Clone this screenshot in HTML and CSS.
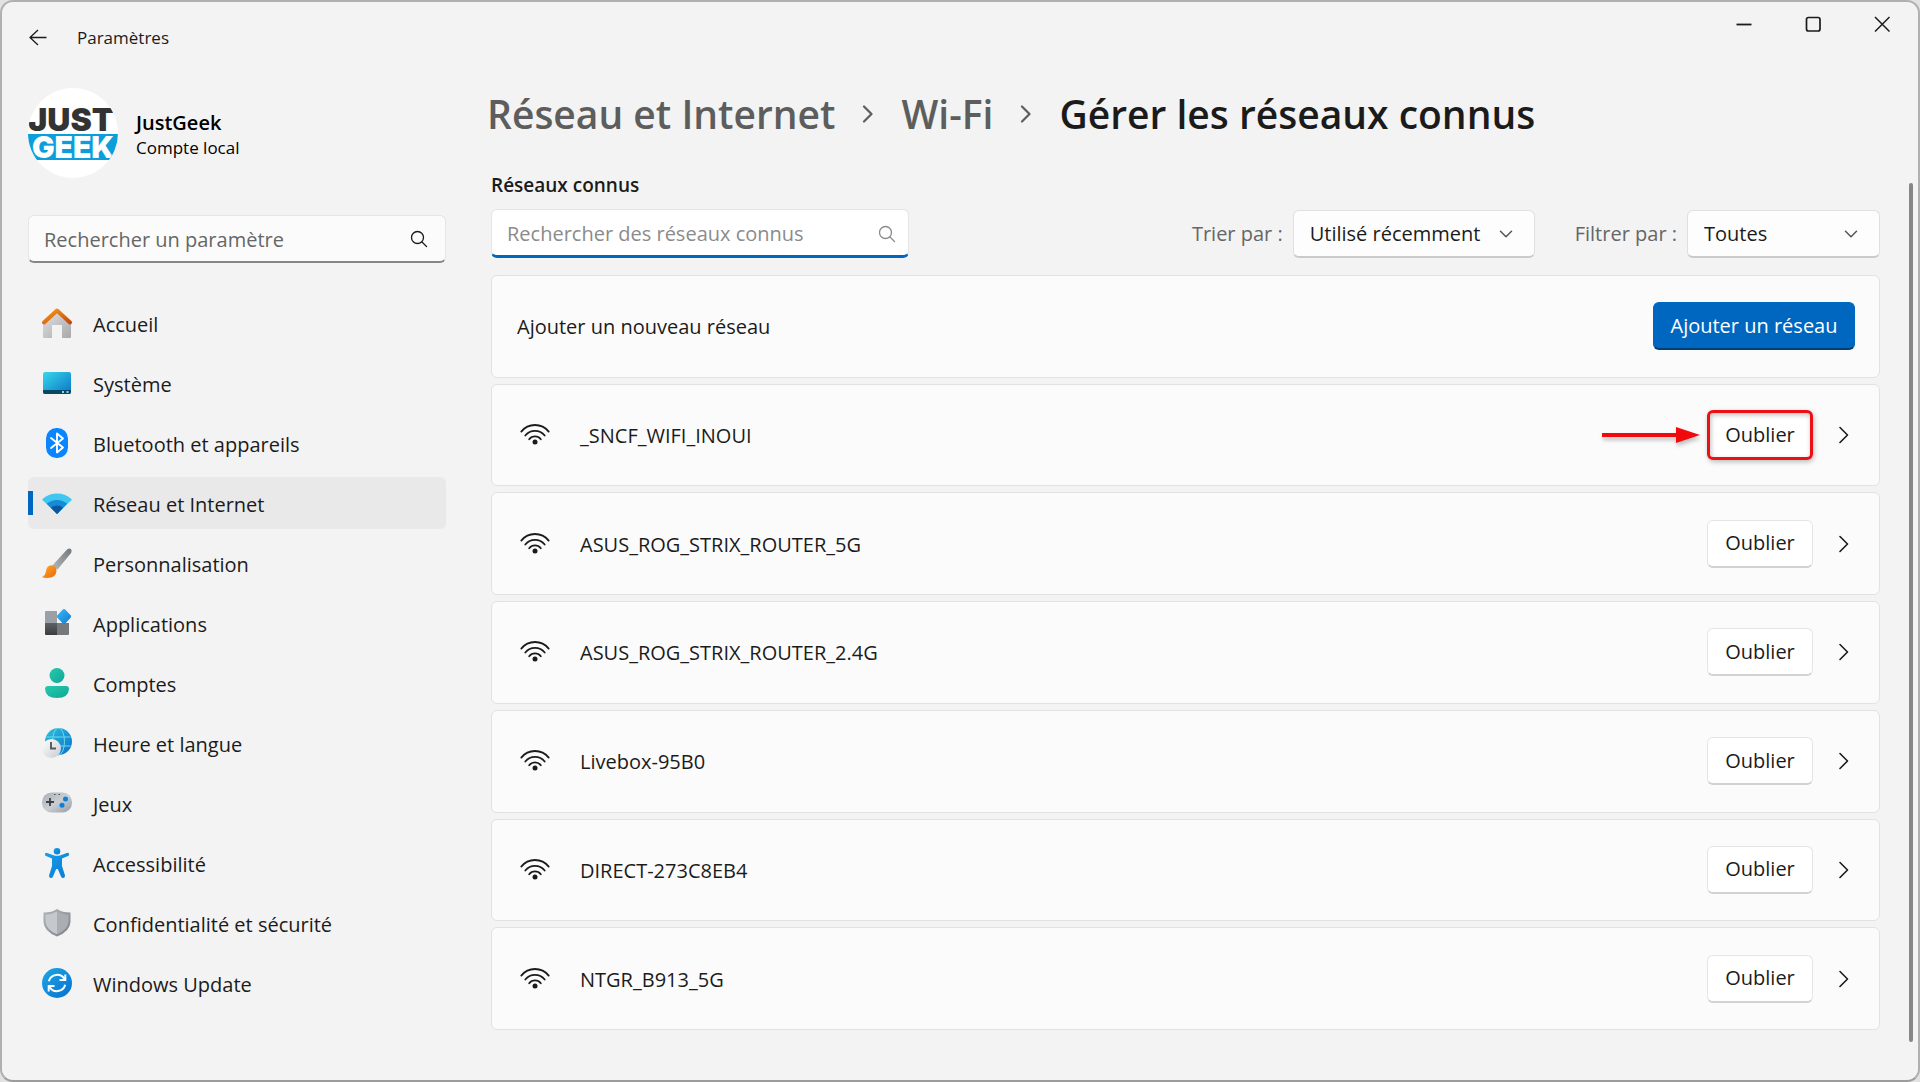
FILE: index.html
```html
<!DOCTYPE html>
<html lang="fr">
<head>
<meta charset="utf-8">
<meta name="viewport" content="width=device-width, initial-scale=1">
<title>Paramètres</title>
<link rel="stylesheet" href="styles.css">
</head>
<body>
<svg class="sprite" aria-hidden="true">
  <defs>
    <linearGradient id="g-roof" x1="0" y1="0" x2="1" y2="1"><stop offset="0" stop-color="#f59a1b"/><stop offset="1" stop-color="#c9480a"/></linearGradient>
    <linearGradient id="g-wall" x1="0" y1="0" x2="1" y2="1"><stop offset="0" stop-color="#e2e2e4"/><stop offset="1" stop-color="#a9a9ac"/></linearGradient>
    <linearGradient id="g-screen" x1="0" y1="0" x2="1" y2="1"><stop offset="0" stop-color="#36d8ec"/><stop offset="1" stop-color="#0b74c4"/></linearGradient>
    <linearGradient id="g-handle" x1="0" y1="1" x2="1" y2="0"><stop offset="0" stop-color="#b4b9bd"/><stop offset="1" stop-color="#72787c"/></linearGradient>
    <linearGradient id="g-brush" x1="0" y1="0" x2="1" y2="1"><stop offset="0" stop-color="#ffab25"/><stop offset="1" stop-color="#e8680f"/></linearGradient>
    <linearGradient id="g-dark" x1="0" y1="0" x2="0" y2="1"><stop offset="0" stop-color="#5d6165"/><stop offset="1" stop-color="#3a3d40"/></linearGradient>
    <linearGradient id="g-diamond" x1="0" y1="0" x2="1" y2="1"><stop offset="0" stop-color="#42b9f5"/><stop offset="1" stop-color="#0c78d4"/></linearGradient>
    <linearGradient id="g-user" x1="0" y1="0" x2="1" y2="1"><stop offset="0" stop-color="#27c9b0"/><stop offset="1" stop-color="#0fa893"/></linearGradient>
    <linearGradient id="g-globe" x1="0" y1="0" x2="1" y2="1"><stop offset="0" stop-color="#2fc3dc"/><stop offset="1" stop-color="#0a6fcb"/></linearGradient>
    <linearGradient id="g-clock" x1="0" y1="0" x2="1" y2="1"><stop offset="0" stop-color="#ffffff"/><stop offset="1" stop-color="#c8cbd0"/></linearGradient>
    <linearGradient id="g-pad" x1="0" y1="0" x2="1" y2="1"><stop offset="0" stop-color="#a9afb7"/><stop offset="0.5" stop-color="#c9ced3"/><stop offset="1" stop-color="#969ca4"/></linearGradient>
    <linearGradient id="g-man" x1="0" y1="0" x2="1" y2="1"><stop offset="0" stop-color="#18a0ea"/><stop offset="1" stop-color="#0a78d4"/></linearGradient>
    <linearGradient id="g-shield" x1="0" y1="0" x2="1" y2="1"><stop offset="0" stop-color="#b3b7ba"/><stop offset="1" stop-color="#7b7f83"/></linearGradient>
    <linearGradient id="g-update" x1="0" y1="0" x2="1" y2="1"><stop offset="0" stop-color="#1fa7e4"/><stop offset="1" stop-color="#0670d2"/></linearGradient>
  </defs>
  <symbol id="wifi" viewBox="0 0 30 24">
    <g fill="none" stroke="currentColor" stroke-width="1.8" stroke-linecap="round"><path d="M1.300 9.600A17.500 17.500 0 0 1 28.700 9.600"/><path d="M5.300 13.500A12.500 12.500 0 0 1 24.700 13.500"/><path d="M9.200 17.200A7.400 7.400 0 0 1 20.800 17.200"/></g>
    <circle cx="15" cy="20" r="2.500" fill="currentColor"/>
  </symbol>
  <symbol id="right" viewBox="0 0 10 18"><path d="M1 1.500L8.500 9L1 16.500" fill="none" stroke="currentColor" stroke-width="1.600" stroke-linecap="round" stroke-linejoin="round"/></symbol>
  <symbol id="crumb" viewBox="0 0 12 18"><path d="M2 1.500L9.500 9L2 16.500" fill="none" stroke="currentColor" stroke-width="2.200" stroke-linecap="round" stroke-linejoin="round"/></symbol>
  <symbol id="down" viewBox="0 0 14 14"><path d="M1.500 4.200L7 9.700L12.500 4.200" fill="none" stroke="currentColor" stroke-width="1.500" stroke-linecap="round" stroke-linejoin="round"/></symbol>
  <symbol id="search" viewBox="0 0 18 18"><g fill="none" stroke="currentColor" stroke-width="1.300" stroke-linecap="round"><circle cx="7.500" cy="7.500" r="6"/><path d="M12 12L16.500 16.500"/></g></symbol>
</svg>

<div class="window">
  <header class="titlebar">
    <button class="back" aria-label="Retour"><svg width="18" height="18" viewBox="0 0 18 18"><path d="M17.500 8.500H1M9 1L1 8.500L9 16" fill="none" stroke="currentColor" stroke-width="1.300" stroke-linejoin="round"/></svg></button>
    <span class="app-name">Paramètres</span>
    <div class="caption">
      <button aria-label="Réduire"><svg width="16" height="16" viewBox="0 0 16 16"><path d="M.5 8.500H15.500" fill="none" stroke="currentColor" stroke-width="1.800"/></svg></button>
      <button aria-label="Agrandir"><svg width="16" height="16" viewBox="0 0 16 16"><rect x="1.500" y="1.500" width="13.500" height="13.500" rx="2" fill="none" stroke="currentColor" stroke-width="1.700"/></svg></button>
      <button aria-label="Fermer"><svg width="16" height="16" viewBox="0 0 16 16"><path d="M1 1L15.500 15.500M15.500 1L1 15.500" fill="none" stroke="currentColor" stroke-width="1.500"/></svg></button>
    </div>
  </header>

  <div class="body">
    <aside class="sidebar">
      <div class="account">
        <svg class="avatar" viewBox="0 0 90 90" role="img" aria-label="JustGeek">
          <clipPath id="disc"><circle cx="45" cy="45" r="45"/></clipPath>
          <g clip-path="url(#disc)"><rect width="90" height="90" fill="#fff"/>
            <text class="logo-top" x="43" y="43" text-anchor="middle" fill="#333">JUST</text>
            <rect y="46" width="90" height="26" fill="#0c9edb"/>
            <text class="logo-bottom" x="45" y="70" text-anchor="middle" fill="#fff">GEEK</text>
          </g>
        </svg>
        <div class="user">
          <div class="user-name">JustGeek</div>
          <div class="user-type">Compte local</div>
        </div>
      </div>

      <label class="field field-setting">
        <input type="text" placeholder="Rechercher un paramètre" aria-label="Rechercher un paramètre">
        <svg class="field-icon" width="18" height="18"><use href="#search"/></svg>
      </label>

      <nav class="menu">
        <a href="#"><svg viewBox="0 0 30 30"><path d="M1 14L15 2L29 14V29Q29 30 28 30H20V17H10V30H2Q1 30 1 29Z" fill="url(#g-wall)"/><path d="M2 14.500L15 2.500L28 14.500" fill="none" stroke="url(#g-roof)" stroke-width="4" stroke-linecap="round" stroke-linejoin="round"/></svg><span>Accueil</span></a>
        <a href="#"><svg viewBox="0 0 30 30"><rect x="1" y="4" width="28" height="22" rx="2" fill="url(#g-screen)"/><path d="M1 22H29V24Q29 26 27 26H3Q1 26 1 24Z" fill="#0a4763"/><path d="M20 23h2v2h-2zM24.500 23h2v2h-2z" fill="#7fd9ea"/></svg><span>Système</span></a>
        <a href="#"><svg viewBox="0 0 30 30"><rect x="4" width="22" height="30" rx="10.500" fill="#0a84ff"/><path d="M9 10L21 19.500L15 24.500V5.500L21 10.500L9 20" fill="none" stroke="#fff" stroke-width="1.900" stroke-linejoin="round" stroke-linecap="round"/></svg><span>Bluetooth et appareils</span></a>
        <a href="#" class="active" aria-current="page"><svg viewBox="0 0 30 30"><path d="M15 26L.7 12.200Q0 11.400 .8 10.700A22 22 0 0 1 29.200 10.700Q30 11.400 29.300 12.200Z" fill="#3fc7ef"/><path d="M15 26L4.800 15.800A15.500 15.500 0 0 1 25.200 15.800Z" fill="#158bd8"/><path d="M15 26L9 19.800A9 9 0 0 1 21 19.800L15.700 25.500Q15 26.200 14.300 25.500Z" fill="#0c56a0"/></svg><span>Réseau et Internet</span></a>
        <a href="#"><svg viewBox="0 0 30 30"><path d="M10 18L25 1.500Q27 -.3 29 1Q30.300 3 28.700 5.500L15.500 21.500Z" fill="url(#g-handle)"/><path d="M.8 28.500Q3.500 27 3.800 24Q4.500 17.500 9.500 17.300Q14 18 14.500 22Q14.500 28 9 29.500Q4.500 30.300 .8 29.500Q0 29 .8 28.500Z" fill="url(#g-brush)"/></svg><span>Personnalisation</span></a>
        <a href="#"><svg viewBox="0 0 30 30"><path d="M3 4Q3 3 4 3H15V15H3Z" fill="#9aa0a6"/><path d="M3 15H15V27H4Q3 27 3 26Z" fill="url(#g-dark)"/><path d="M15 15H27V26Q27 27 26 27H15Z" fill="#75797e"/><path d="M20.800 1.500Q22 .4 23.200 1.500L28.600 7.300Q29.500 8.500 28.600 9.700L23.200 15.500Q22 16.600 20.800 15.500L15.400 9.700Q14.500 8.500 15.400 7.300Z" fill="url(#g-diamond)"/></svg><span>Applications</span></a>
        <a href="#"><svg viewBox="0 0 30 30"><circle cx="15" cy="7.500" r="7.500" fill="url(#g-user)"/><path d="M6 18H24Q27 18 27 21Q26.500 30 15 30Q3.500 30 3 21Q3 18 6 18Z" fill="url(#g-user)"/></svg><span>Comptes</span></a>
        <a href="#"><svg viewBox="0 0 30 30"><circle cx="16.500" cy="13.500" r="13.500" fill="url(#g-globe)"/><g fill="none" stroke="#6fd9e8" stroke-width="1"><ellipse cx="16.500" cy="13.500" rx="6" ry="13.500"/><path d="M4.500 9H28.500M4.500 18H28.500"/></g><circle cx="9.500" cy="20.500" r="9.500" fill="url(#g-clock)"/><path d="M9 14V20.500H14" fill="none" stroke="#54585c" stroke-width="1.900"/></svg><span>Heure et langue</span></a>
        <a href="#"><svg viewBox="0 0 30 30"><rect y="4.500" width="30" height="20" rx="9.500" fill="url(#g-pad)"/><path d="M8 10V18M4 14H12" stroke="#3d4247" stroke-width="1.800"/><path d="M12 6.500h1.500M16.500 6.500h1.500" stroke="#4b5055" stroke-width="1.200"/><circle cx="23.500" cy="11" r="2.500" fill="#0f7fd8"/><circle cx="20" cy="17.300" r="2.500" fill="#0f7fd8"/></svg><span>Jeux</span></a>
        <a href="#"><svg viewBox="0 0 30 30"><g fill="url(#g-man)"><circle cx="15" cy="3.300" r="3.300"/><path d="M4.500 4.700L11.500 7.200Q15 8.200 18.500 7.200L25.500 4.700Q27.300 4.700 27.200 6.500Q27 7.500 26 8L20 10.500V18L23 27.500Q23 30 21 30Q19.600 30 19 28.500L15.800 21H14.200L11 28.500Q10.400 30 9 30Q7 30 7 27.500L10 18V10.500L4 8Q3 7.500 2.900 6.500Q2.800 4.700 4.500 4.700Z"/></g></svg><span>Accessibilité</span></a>
        <a href="#"><svg viewBox="0 0 30 30"><path d="M15 1Q20 4.600 28.500 4.600V14Q28 23.500 15 28.500Q2 23.500 1.500 14V4.600Q10 4.600 15 1Z" fill="url(#g-shield)"/><path d="M15 3.500Q9.500 6.500 3.500 6.700V14Q4.500 21.800 15 26.300Z" fill="#c5c9cd"/><path d="M15 3.500Q20.500 6.500 26.500 6.700V14Q25.500 21.800 15 26.300Z" fill="#aaaeb3"/></svg><span>Confidentialité et sécurité</span></a>
        <a href="#"><svg viewBox="0 0 30 30"><circle cx="15" cy="15" r="15" fill="url(#g-update)"/><g fill="none" stroke="#fff" stroke-width="2"><path d="M6.800 13.200A8.600 8.600 0 0 1 22.600 11.300M23.200 16.800A8.600 8.600 0 0 1 7.400 18.700"/><path d="M23.300 6.500V12H17.500M6.700 23.500V18H12.500"/></g></svg><span>Windows Update</span></a>
      </nav>
    </aside>

    <main class="main">
      <h1 class="breadcrumb">
        <a href="#">Réseau et Internet</a>
        <svg width="12" height="18"><use href="#crumb"/></svg>
        <a href="#">Wi-Fi</a>
        <svg width="12" height="18"><use href="#crumb"/></svg>
        <span>Gérer les réseaux connus</span>
      </h1>
      <h2 class="section-title"><label for="network-search">Réseaux connus</label></h2>

      <div class="toolbar">
        <div class="field field-network">
          <input id="network-search" type="text" placeholder="Rechercher des réseaux connus">
          <svg class="field-icon" width="18" height="18"><use href="#search"/></svg>
        </div>
        <div class="filters">
          <div class="filter">
            <label for="sort">Trier par :</label>
            <div class="combo combo-sort"><select id="sort"><option>Utilisé récemment</option></select><svg width="14" height="14"><use href="#down"/></svg></div>
          </div>
          <div class="filter">
            <label for="filter">Filtrer par :</label>
            <div class="combo combo-filter"><select id="filter"><option>Toutes</option></select><svg width="14" height="14"><use href="#down"/></svg></div>
          </div>
        </div>
      </div>

      <div class="cards">
        <section class="card card-add"><span class="card-name">Ajouter un nouveau réseau</span><button class="btn btn-primary">Ajouter un réseau</button></section>
        <section class="card"><svg class="wifi"><use href="#wifi"/></svg><span class="card-name">_SNCF_WIFI_INOUI</span>
          <span class="callout"><svg class="arrow" viewBox="0 0 98 18" aria-hidden="true"><path d="M0 7H74V1L98 9L74 17V11H0Z" fill="#f00a0e"/></svg><button class="btn btn-marked">Oublier</button></span>
          <button class="more" aria-label="Détails"><svg width="10" height="18"><use href="#right"/></svg></button></section>
        <section class="card"><svg class="wifi"><use href="#wifi"/></svg><span class="card-name">ASUS_ROG_STRIX_ROUTER_5G</span><button class="btn">Oublier</button><button class="more" aria-label="Détails"><svg width="10" height="18"><use href="#right"/></svg></button></section>
        <section class="card"><svg class="wifi"><use href="#wifi"/></svg><span class="card-name">ASUS_ROG_STRIX_ROUTER_2.4G</span><button class="btn">Oublier</button><button class="more" aria-label="Détails"><svg width="10" height="18"><use href="#right"/></svg></button></section>
        <section class="card"><svg class="wifi"><use href="#wifi"/></svg><span class="card-name">Livebox-95B0</span><button class="btn">Oublier</button><button class="more" aria-label="Détails"><svg width="10" height="18"><use href="#right"/></svg></button></section>
        <section class="card"><svg class="wifi"><use href="#wifi"/></svg><span class="card-name">DIRECT-273C8EB4</span><button class="btn">Oublier</button><button class="more" aria-label="Détails"><svg width="10" height="18"><use href="#right"/></svg></button></section>
        <section class="card"><svg class="wifi"><use href="#wifi"/></svg><span class="card-name">NTGR_B913_5G</span><button class="btn">Oublier</button><button class="more" aria-label="Détails"><svg width="10" height="18"><use href="#right"/></svg></button></section>
      </div>
    </main>

    <div class="scrollbar" aria-hidden="true"></div>
  </div>
</div>
</body>
</html>
```
FILE: styles.css
```css
* { box-sizing: border-box; }
body {
  margin: 0;
  background: #e2e2e2;
  color: #1b1b1b;
  font: 20px/28px "Open Sans", "Noto Sans", sans-serif;
}
button, input, select { font: inherit; color: inherit; margin: 0; }
button { border: 0; padding: 0; background: none; }
a { color: inherit; text-decoration: none; }
svg { flex: none; display: block; }
.sprite { position: absolute; width: 0; height: 0; }

.window {
  display: flex;
  flex-direction: column;
  min-height: 100vh;
  background: #f3f3f3;
  border: 2px solid #b0b0b0;
  border-bottom-color: #9c9c9c;
  border-radius: 13px;
}

/* Title bar */
.titlebar { display: flex; align-items: center; height: 72px; padding-left: 27px; }
.back { display: grid; place-items: center; width: 18px; height: 28px; }
.app-name { margin-left: 30px; font-size: 17px; }
.caption { display: flex; align-self: flex-start; margin-left: auto; margin-right: 2px; }
.caption button { display: grid; place-items: center; width: 69px; height: 44px; }

.body {
  flex: 1;
  display: grid;
  grid-template-columns: 418px minmax(0, 1fr) 4px;
  padding: 0 5px 0 26px;
}

/* Sidebar */
.sidebar { padding-top: 14px; }
.account { display: flex; align-items: center; gap: 18px; }
.avatar { width: 90px; height: 90px; }
.logo-top { font: 900 32px Inter, sans-serif; }
.logo-bottom { font: 900 30px Inter, sans-serif; }
.user { padding-top: 4px; color: #000; }
.user-name { font-weight: 600; line-height: 26px; }
.user-type { font-size: 17px; line-height: 24px; }

.field { display: grid; align-items: center; }
.field > * { grid-area: 1 / 1; }
.field input {
  width: 100%;
  height: 48px;
  padding: 2px 48px 0 15px;
  border: 1px solid #e5e5e5;
  border-bottom: 2px solid #868686;
  border-radius: 6px;
  background: #fbfbfb;
  outline: 0;
}
.field input::placeholder { color: #666; opacity: 1; }
.field-icon { justify-self: end; margin-right: 18px; pointer-events: none; }
.field-setting { margin-top: 37px; }
.field-network { width: 418px; }
.field-network input { height: 49px; background: #fff; border-bottom: 3px solid #0067c0; }
.field-network input::placeholder { color: #8b8b8b; }
.field-network .field-icon { color: #8b8b8b; margin-right: 13px; }

.menu { display: grid; gap: 8px; margin-top: 34px; }
.menu a {
  display: flex;
  align-items: center;
  gap: 21px;
  height: 52px;
  padding-left: 14px;
  border-radius: 6px;
}
.menu svg { width: 30px; height: 30px; }
.menu span { padding-top: 3px; }
.menu .active {
  background: linear-gradient(#0067c0, #0067c0) no-repeat 0 50% / 5px 24px, #e9e9e9;
}

/* Main column */
.main {
  display: flex;
  flex-direction: column;
  padding: 12px 29px 50px 45px;
}
.breadcrumb {
  display: flex;
  align-items: center;
  gap: 27px;
  margin: 0 0 0 -4px;
  font-size: 39px;
  line-height: 56px;
  font-weight: 600;
  white-space: nowrap;
}
.breadcrumb a, .breadcrumb svg { color: #5d5d5d; }
.section-title { margin: 29px 0 10px; font-size: 19px; line-height: 28px; font-weight: 600; }

.toolbar { display: flex; align-items: center; justify-content: space-between; margin-bottom: 17px; }
.filters { display: flex; gap: 40px; }
.filter { display: flex; align-items: center; gap: 10px; color: #666; }
.combo { display: grid; align-items: center; color: #1b1b1b; }
.combo > * { grid-area: 1 / 1; }
.combo select {
  appearance: none;
  width: 100%;
  height: 48px;
  padding: 2px 16px 0;
  border: 1px solid #e0e0e0;
  border-bottom: 2px solid #cacaca;
  border-radius: 6px;
  background: #fdfdfd;
}
.combo svg { justify-self: end; margin-right: 22px; color: #555; pointer-events: none; }
.combo-sort { width: 242px; }
.combo-filter { width: 193px; }

/* Network cards */
.cards { flex: 1; display: grid; grid-auto-rows: 1fr; gap: 6px; }
.card {
  display: flex;
  align-items: center;
  min-height: 80px;
  padding: 0 30px 0 28px;
  border: 1px solid #e2e2e2;
  border-radius: 6px;
  background: #fbfbfb;
}
.card-add { padding: 0 24px 0 25px; }
.card-name { flex: 1; padding-top: 2px; }
.wifi { width: 30px; height: 24px; margin: 0 30px 2px 0; }
.btn {
  width: 106px;
  height: 48px;
  border: 1px solid #e5e5e5;
  border-bottom: 2px solid #d2d2d2;
  border-radius: 6px;
  background: #fff;
}
.btn-primary { width: 202px; background: #0067c0; color: #fff; border-color: #0067c0; border-bottom-color: #003e73; }
.btn-marked {
  height: 50px;
  border: 3px solid #ec0f14;
  box-shadow: 1px 2px 5px rgba(0, 0, 0, .25), inset 1px 2px 5px rgba(0, 0, 0, .25);
}
.callout { display: flex; align-items: center; gap: 7px; }
.arrow { width: 98px; height: 18px; filter: drop-shadow(1px 3px 2px rgba(0, 0, 0, .25)); }
.more { display: grid; place-items: center; width: 10px; height: 48px; margin-left: 26px; }

.scrollbar { margin: 109px 0 38px; border-radius: 2px; background: #868686; }
```
